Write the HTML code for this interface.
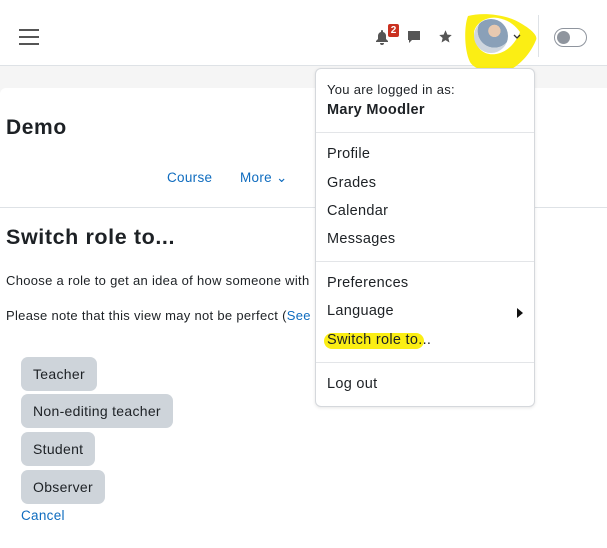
<!DOCTYPE html>
<html><head><style>
*{box-sizing:border-box;margin:0;padding:0}
body{width:607px;height:525px;overflow:hidden;background:#f5f5f5;font-family:"Liberation Sans",sans-serif;color:#1d2125;font-size:14px;position:relative}
.abs{position:absolute}
#hdr{left:0;top:0;width:607px;height:66px;background:#fff;border-bottom:1px solid #dee2e6}
#card{left:0;top:88px;width:620px;height:460px;background:#fff;border-radius:6px 0 0 0}
.btn{position:absolute;left:21px;height:34px;background:#ced4da;border-radius:7px;padding:0 12px;line-height:34px;font-size:14px;color:#1d2125;letter-spacing:.3px}
#dd{left:315px;top:68px;width:220px;height:339px;background:#fff;border:1px solid #d5d8dc;border-radius:6px;box-shadow:0 1px 3px rgba(0,0,0,.1)}
.it{position:absolute;left:11px;font-size:14.5px;color:#1d2125;letter-spacing:.3px}
.hr{position:absolute;left:0;width:218px;height:1px;background:#e3e5e8}
a{color:#0f6cbf;text-decoration:none}
</style></head><body>
<div id="hdr" class="abs">
 <div class="abs" style="left:19px;top:29px;width:20px;height:2px;background:#555"></div>
 <div class="abs" style="left:19px;top:36px;width:20px;height:2px;background:#555"></div>
 <div class="abs" style="left:19px;top:43px;width:20px;height:2px;background:#555"></div>
 <svg class="abs" style="left:375px;top:29px" width="14" height="16" viewBox="0 0 14 16"><path d="M7 1a1 1 0 0 1 1 1v1c2 .5 3 2 3 4v3l2 2v1H1v-1l2-2V7c0-2 1-3.5 3-4V2a1 1 0 0 1 1-1zM5 14h4a2 2 0 0 1-4 0z" fill="#555"/></svg>
 <div class="abs" style="left:388px;top:24px;width:11px;height:13px;background:#ca3120;color:#fff;font-size:10px;font-weight:bold;text-align:center;line-height:13px;border-radius:2px">2</div>
 <svg class="abs" style="left:407px;top:30px" width="14" height="14" viewBox="0 0 14 14"><path d="M1 1h12v9H5l-3 3v-3H1z" fill="#555"/></svg>
 <svg class="abs" style="left:438px;top:29px" width="15" height="15" viewBox="0 0 24 24"><path d="M12 2l3 7 7 .6-5.4 4.7 1.7 7.2L12 17.8 5.7 21.5l1.7-7.2L2 9.6 9 9z" fill="#555"/></svg>
 <svg class="abs" style="left:462px;top:10px" width="80" height="64" viewBox="0 0 80 64"><path d="M6 6C20 2 45 4 60 14C70 20 76 26 74 30C70 40 62 52 48 60C34 64 14 62 8 52C2 40 2 16 6 6z" fill="#fbee14"/><path d="M12 22C14 12 26 6 36 8C46 10 52 14 58 22C54 32 46 42 34 44C22 46 12 38 12 22z" fill="#fff"/></svg>
 <div class="abs" style="left:474px;top:19px;width:34px;height:34px;border-radius:50%;background:radial-gradient(circle at 60% 35%,#e8c9b0 0 20%,#8aa0b8 21% 55%,#cfd6de 56%)"></div>
 <svg class="abs" style="left:513px;top:34px" width="8" height="6" viewBox="0 0 8 6"><path d="M1 1l3 3 3-3" stroke="#333" stroke-width="1.3" fill="none"/></svg>
 <div class="abs" style="left:538px;top:15px;width:1px;height:42px;background:#dee2e6"></div>
 <div class="abs" style="left:554px;top:28px;width:33px;height:19px;border:1.5px solid #8f959e;border-radius:10px"></div>
 <div class="abs" style="left:557px;top:31px;width:13px;height:13px;background:#8f959e;border-radius:50%"></div>
</div>
<div id="card" class="abs"></div>
<div class="abs" style="left:6px;top:116px;font-size:21px;font-weight:bold;letter-spacing:.6px">Demo</div>
<a class="abs" style="left:167px;top:170px;font-size:13.5px;letter-spacing:.3px">Course</a>
<a class="abs" style="left:240px;top:170px;font-size:13.5px;letter-spacing:.3px">More ⌄</a>
<div class="abs" style="left:0;top:207px;width:607px;height:1px;background:#dee2e6"></div>
<div class="abs" style="left:6px;top:225px;font-size:21.5px;font-weight:bold;letter-spacing:.6px">Switch role to...</div>
<div class="abs" style="left:6px;top:273px;font-size:13px;letter-spacing:.3px;white-space:nowrap">Choose a role to get an idea of how someone with</div>
<div class="abs" style="left:6px;top:308px;font-size:13px;letter-spacing:.3px;white-space:nowrap">Please note that this view may not be perfect (<a>See</a></div>
<div class="btn" style="top:357px">Teacher</div>
<div class="btn" style="top:394px">Non-editing teacher</div>
<div class="btn" style="top:432px">Student</div>
<div class="btn" style="top:470px">Observer</div>
<a class="abs" style="left:21px;top:508px;font-size:13.5px;letter-spacing:.3px">Cancel</a>
<div id="dd" class="abs">
 <div class="it" style="top:13px;font-size:13px">You are logged in as:</div>
 <div class="it" style="top:33px;font-weight:bold">Mary Moodler</div>
 <div class="hr" style="top:63px"></div>
 <div class="it" style="top:77px">Profile</div>
 <div class="it" style="top:106px">Grades</div>
 <div class="it" style="top:134px">Calendar</div>
 <div class="it" style="top:162px">Messages</div>
 <div class="hr" style="top:192px"></div>
 <div class="it" style="top:206px">Preferences</div>
 <div class="it" style="top:234px">Language</div>
 <div class="abs" style="left:201px;top:239px;width:0;height:0;border-left:6px solid #111;border-top:5px solid transparent;border-bottom:5px solid transparent"></div>
 <div class="abs" style="left:8px;top:264px;width:100px;height:16px;background:#fbee14;border-radius:8px"></div>
 <div class="it" style="top:263px">Switch role to...</div>
 <div class="hr" style="top:293px"></div>
 <div class="it" style="top:307px">Log out</div>
</div>
</body></html>
